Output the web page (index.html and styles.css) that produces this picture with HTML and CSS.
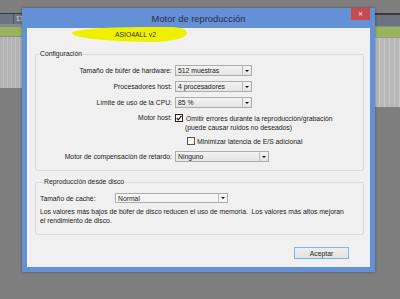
FILE: index.html
```
<!DOCTYPE html>
<html lang="es">
<head>
    <meta charset="UTF-8">
    <meta name="viewport" content="width=device-width, initial-scale=1.0">
    <title>Motor de reproducción</title>
    <link rel="stylesheet" href="styles.css">
</head>
<body>
    <div class="daw">
        <div class="side side-left">
            <div class="gap"></div>
            <div class="ruler"><span class="bar-num">17</span></div>
            <div class="ruler-sep"></div>
            <div class="green"></div>
            <div class="track-line"></div>
            <div class="clips"></div>
        </div>
        <div class="side side-right">
            <div class="gap"></div>
            <div class="ruler"></div>
            <div class="ruler-sep"></div>
            <div class="green"></div>
            <div class="clips"></div>
        </div>
    </div>

    <div class="dialog">
        <div class="titlebar">
            <span></span>
            <span class="title">Motor de reproducción</span>
            <button class="close">&#x2715;</button>
        </div>
        <div class="content">
            <div class="brand">ASIO4ALL v2</div>

            <fieldset class="group group-config">
                <legend>Configuración</legend>
                <div class="form">
                    <label class="lbl">Tamaño de búfer de hardware:</label>
                    <div class="combo combo-sm"><span>512 muestras</span><i class="arrow"></i></div>

                    <label class="lbl">Procesadores host:</label>
                    <div class="combo combo-sm"><span>4 procesadores</span><i class="arrow"></i></div>

                    <label class="lbl">Límite de uso de la CPU:</label>
                    <div class="combo combo-sm"><span>85 %</span><i class="arrow"></i></div>

                    <label class="lbl lbl-top">Motor host:</label>
                    <div class="host">
                        <div class="check-line">
                            <span class="check checked">
                                <svg width="6" height="6" viewBox="0 0 6 6"><path d="M0.6 3.2 L2.3 4.9 L5.4 0.8" fill="none" stroke="#111" stroke-width="1.2"/></svg>
                            </span>
                            <span>Omitir errores durante la reproducción/grabación</span>
                        </div>
                        <div class="sub-line">(puede causar ruidos no deseados)</div>
                        <div class="check-line indent">
                            <span class="check"></span>
                            <span>Minimizar latencia de E/S adicional</span>
                        </div>
                    </div>

                    <label class="lbl">Motor de compensación de retardo:</label>
                    <div class="combo combo-md"><span>Ninguno</span><i class="arrow"></i></div>
                </div>
            </fieldset>

            <fieldset class="group group-disk">
                <legend>Reproducción desde disco</legend>
                <div class="cache-row">
                    <label class="cache-lbl">Tamaño de caché:</label>
                    <div class="combo combo-lg"><span>Normal</span><i class="arrow"></i></div>
                </div>
                <p class="note">Los valores más bajos de búfer de disco reducen el uso de memoria.&nbsp; Los valores más altos mejoran<br>el rendimiento de disco.</p>
            </fieldset>

            <button class="ok">Aceptar</button>
        </div>
    </div>
</body>
</html>
```
FILE: styles.css
```
* {
    box-sizing: border-box;
}

body {
    margin: 0;
    width: 400px;
    height: 299px;
    overflow: hidden;
    position: relative;
    background: #7f7f7f;
    font-family: "Liberation Sans", Arial, sans-serif;
    font-size: 6.8px;
    color: #222;
}

/* DAW behind the dialog */
.daw {
    display: flex;
    justify-content: space-between;
    height: 299px;
}

.side {
    display: flex;
    flex-direction: column;
}

.side-left {
    width: 22px;
}

.side-right {
    width: 25px;
}

.gap {
    height: 13px;
    background: #7f7f7f;
}

.ruler {
    height: 11px;
    background: #6c7482;
    border-top: 1px solid #3a3a3a;
    position: relative;
}

.side-right .ruler {
    height: 13px;
    border-top-width: 2px;
}

.bar-num {
    display: block;
    margin-left: 13px;
    height: 100%;
    border-left: 1px solid #4f5560;
    padding-left: 2px;
    color: #e4e6ea;
    font-size: 6.5px;
    line-height: 10px;
}

.ruler-sep {
    height: 3px;
    background: #858a92;
}

.side-right .ruler-sep {
    height: 1px;
}

.green {
    height: 9px;
    background: #98b55c;
}

.side-right .green {
    height: 10px;
}

.track-line {
    height: 1px;
    background: #8d8d8d;
}

.clips {
    height: 51px;
    background: repeating-linear-gradient(90deg, #b3b3b3 0 3px, #c2c2c2 3px 4px);
}

.side-right .clips {
    height: 70px;
    border-top: 1px solid #9a9a9a;
    background: repeating-linear-gradient(90deg, #b8b8b8 0 4px, #c6c6c6 4px 5px);
}

/* dialog window */
.dialog {
    position: absolute;
    left: 22px;
    top: 8px;
    width: 353px;
    height: 264px;
    background: #6490d6;
    padding: 0 5px 5px;
    display: flex;
    flex-direction: column;
    box-shadow: 0 0 3px rgba(0, 0, 0, .35);
}

.titlebar {
    height: 20px;
    display: grid;
    grid-template-columns: 1fr auto 1fr;
    align-items: center;
}

.title {
    font-size: 9.4px;
    color: #2b2d46;
    padding-top: 1px;
}

.close {
    justify-self: end;
    align-self: start;
    width: 19px;
    height: 12px;
    border: 0;
    padding: 0;
    background: #c84a4e;
    color: #fff;
    font-size: 6px;
    line-height: 12px;
    font-family: "DejaVu Sans", sans-serif;
}

.content {
    flex: 1;
    background: #f0f0f0;
    border-left: 1px solid #fafafa;
    display: flex;
    flex-direction: column;
    align-items: flex-start;
}

.brand {
    margin: -1px 0 0 44px;
    width: 115px;
    height: 15px;
    padding-left: 43px;
    line-height: 15px;
    background: #eef000;
    border-radius: 60% 12% 30% 70% / 40% 40% 60% 60%;
    color: #333;
}

/* group boxes */
.group {
    align-self: stretch;
    margin: 8px 6px 0 7px;
    padding: 7px 0 8px;
    border: 1px solid #dadada;
    border-radius: 2px;
    min-inline-size: 0;
}

.group legend {
    margin-left: 3px;
    padding: 0 1px;
    line-height: 8px;
}

.group-disk {
    margin-top: 7px;
    padding: 7px 0 9px 4px;
}

.form {
    display: grid;
    grid-template-columns: 136px auto;
    column-gap: 3px;
    row-gap: 5px;
    align-items: center;
}

.lbl {
    justify-self: end;
    white-space: nowrap;
}

.lbl-top {
    align-self: start;
    line-height: 10px;
}

.combo {
    height: 11px;
    border: 1px solid #acacac;
    background: linear-gradient(#f3f3f3, #e4e4e4);
    display: flex;
    align-items: center;
    justify-content: space-between;
    padding-left: 2px;
}

.combo span {
    white-space: nowrap;
}

.combo-sm {
    width: 77px;
}

.combo-md {
    width: 94px;
}

.combo-lg {
    width: 113px;
    height: 10px;
    background: #f5f5f5;
}

.arrow {
    width: 9px;
    height: 100%;
    border-left: 1px solid #bdbdbd;
    display: flex;
    align-items: center;
    justify-content: center;
}

.arrow::after {
    content: "";
    border-left: 2px solid transparent;
    border-right: 2px solid transparent;
    border-top: 2px solid #111;
}

.host {
    display: flex;
    flex-direction: column;
}

.check-line {
    height: 10px;
    display: flex;
    align-items: center;
    gap: 3px;
    white-space: nowrap;
}

.check-line.indent {
    margin-top: 3px;
    padding-left: 12px;
    gap: 2px;
}

.sub-line {
    height: 10px;
    line-height: 10px;
    padding-left: 10px;
    white-space: nowrap;
}

.check {
    width: 8px;
    height: 8px;
    border: 1px solid #555;
    background: #fff;
    display: flex;
    align-items: center;
    justify-content: center;
}

.check.checked {
    border-color: #222;
}

.cache-row {
    display: flex;
    align-items: center;
}

.cache-lbl {
    width: 75px;
}

.note {
    margin: 4px 0 0;
    line-height: 9px;
    white-space: nowrap;
}

.ok {
    align-self: flex-end;
    margin: 12px 21px 0 0;
    width: 55px;
    height: 12px;
    padding: 0;
    border: 1px solid #7eb4ea;
    background: linear-gradient(#eeeeee, #e3e3e3);
    font-family: inherit;
    font-size: 6.8px;
    color: #222;
}
```
